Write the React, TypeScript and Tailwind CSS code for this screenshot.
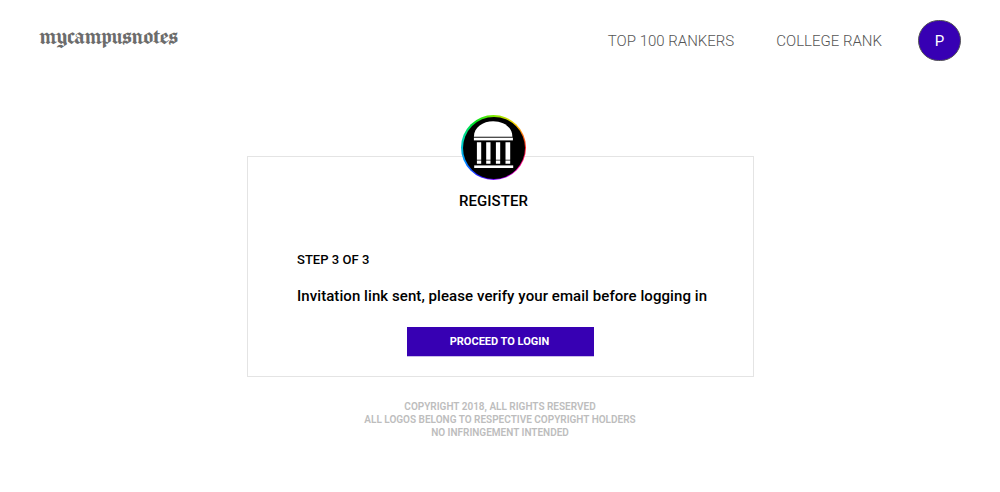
function Logo() {
  return (
    <div className="relative z-10 h-[65px] w-[65px] rounded-full bg-[conic-gradient(#7dea00,#ffd000_12%,#ff2020_25%,#ff00b0_36%,#8a00ff_48%,#2020ff_58%,#0090ff_68%,#00d8c0_78%,#00e020_90%,#7dea00)] p-[1.5px]">
      <svg viewBox="1.5 1.5 62 62" className="block h-full w-full">
        <circle cx="32.5" cy="32.5" r="31" fill="#000" />
        <g fill="#fff" transform="translate(-0.6 -0.3)">
          <path d="M13 21.5C13 12 22 6 32.3 6S51.5 12 51.5 21.5Z" />
          <rect x="13" y="22.5" width="39" height="2.7" />
          <path d="M16 27h4.3v17.5H16zM25.3 27h4.3v17.5h-4.3zM35 27h4.3v17.5H35zM44.6 27h4.7v17.5h-4.7z" />
          <path d="M16 45.3h4.3v3.2H16zM25.3 45.3h4.3v3.2h-4.3zM35 45.3h4.3v3.2H35zM44.6 45.3h4.7v3.2h-4.7z" />
          <rect x="13.3" y="50.2" width="39" height="2.6" />
        </g>
      </svg>
    </div>
  );
}

export default function App() {
  return (
    <div className="h-[492px] overflow-hidden bg-white font-['Roboto',sans-serif] text-black">
      <header className="flex h-[82px] items-start justify-between pr-[39px] pl-[39px]">
        <a className="mt-[23px] font-['Old_English_Text_MT','Manufacturing_Consent','Pirata_One','UnifrakturCook','Liberation_Serif',serif] text-[27px] leading-[26px] font-normal tracking-[-0.8px] whitespace-nowrap text-[#6c6c6c]">mycampusnotes</a>
        <nav className="flex items-start text-[15px] leading-5 font-light whitespace-nowrap text-[#555]">
          <a className="mt-[31px] mr-[42px]">TOP 100 RANKERS</a>
          <a className="mt-[31px] mr-[36px]">COLLEGE RANK</a>
          <button className="mt-5 flex h-[41px] w-[43px] items-center justify-center rounded-full border border-[#555] bg-[#3700b3] text-[15px] font-normal text-white">P</button>
        </nav>
      </header>
      <main className="ml-[247px] flex w-[507px] flex-col pt-[33px]">
        <div className="-mb-6 ml-[214px]"><Logo /></div>
        <section className="h-[221px] border border-[#e4e4e4]">
          <h1 className="mt-[34px] mr-[14px] text-center text-[15px] leading-5 font-medium tracking-[0.08px]">REGISTER</h1>
          <h2 className="mt-[39px] ml-[49px] text-[13px] leading-5 font-medium tracking-[0.03px]">STEP 3 OF 3</h2>
          <p className="mt-4 ml-[49px] text-[15px] leading-5 font-medium tracking-[0.07px] whitespace-nowrap">Invitation link sent, please verify your email before logging in</p>
          <button className="mt-[21px] ml-[159px] block h-[29px] w-[187px] bg-[#3700b3] pt-px pr-[2px] text-[11px] font-bold text-white shadow-[0_1px_0_#c9bce8]">PROCEED TO LOGIN</button>
        </section>
      </main>
      <footer className="mt-[23px] text-center text-[10px] leading-[13px] font-semibold text-[#bdbdbd]">
        <p>COPYRIGHT 2018, ALL RIGHTS RESERVED</p>
        <p>ALL LOGOS BELONG TO RESPECTIVE COPYRIGHT HOLDERS</p>
        <p>NO INFRINGEMENT INTENDED</p>
      </footer>
    </div>
  );
}
